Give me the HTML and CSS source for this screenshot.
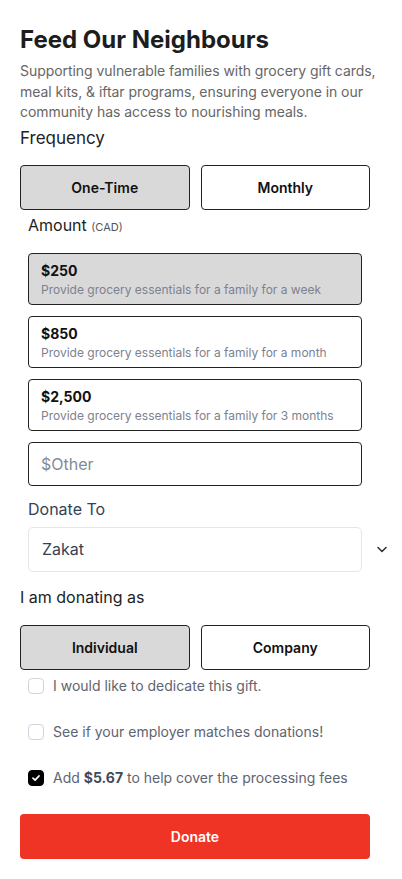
FILE: index.html
```html
<!DOCTYPE html>
<html lang="en">
<head>
    <meta charset="UTF-8">
    <meta name="viewport" content="width=device-width, initial-scale=1.0">
    <title>Feed Our Neighbours</title>
    <link rel="stylesheet" href="styles.css">
</head>
<body>
    <main class="donate-form">
        <h1 class="title">Feed Our Neighbours</h1>
        <p class="intro">Supporting vulnerable families with grocery gift cards, meal kits, &amp; iftar programs, ensuring everyone in our community has access to nourishing meals.</p>

        <div class="section-label">Frequency</div>
        <div class="toggle-group">
            <button class="toggle active">One-Time</button>
            <button class="toggle">Monthly</button>
        </div>

        <div class="inset">
            <div class="amount-label">Amount <span class="currency">(CAD)</span></div>
            <div class="amount-list">
                <button class="amount-card active">
                    <span class="amount-value">$250</span>
                    <span class="amount-desc">Provide grocery essentials for a family for a week</span>
                </button>
                <button class="amount-card">
                    <span class="amount-value">$850</span>
                    <span class="amount-desc">Provide grocery essentials for a family for a month</span>
                </button>
                <button class="amount-card">
                    <span class="amount-value">$2,500</span>
                    <span class="amount-desc">Provide grocery essentials for a family for 3 months</span>
                </button>
                <input class="amount-other" type="text" placeholder="$Other">
            </div>

            <div class="donate-to-label">Donate To</div>
            <div class="select-row">
                <div class="select-box">Zakat</div>
                <svg class="chevron" width="14" height="14" viewBox="0 0 14 14">
                    <path d="M3 5.5 L7 9.5 L11 5.5" fill="none" stroke="#333" stroke-width="1.6" stroke-linecap="round" stroke-linejoin="round"/>
                </svg>
            </div>
        </div>

        <div class="section-label donating-as">I am donating as</div>
        <div class="toggle-group">
            <button class="toggle active">Individual</button>
            <button class="toggle">Company</button>
        </div>

        <div class="checks">
            <label class="check-row">
                <span class="checkbox"></span>
                I would like to dedicate this gift.
            </label>
            <label class="check-row">
                <span class="checkbox"></span>
                See if your employer matches donations!
            </label>
            <label class="check-row">
                <span class="checkbox checked">
                    <svg width="10" height="10" viewBox="0 0 10 10">
                        <path d="M2 5.2 L4.1 7.2 L8 3" fill="none" stroke="#fff" stroke-width="1.8" stroke-linecap="round" stroke-linejoin="round"/>
                    </svg>
                </span>
                <span>Add <strong>$5.67</strong> to help cover the processing fees</span>
            </label>
        </div>

        <button class="donate-button">Donate</button>
    </main>
</body>
</html>
```

FILE: styles.css
```css
* {
    margin: 0;
    padding: 0;
    box-sizing: border-box;
}

body {
    font-family: Inter, 'Noto Sans', sans-serif;
    background: #ffffff;
    color: #1a1a1a;
}

.donate-form {
    width: 350px;
    margin-left: 20px;
    padding-top: 24px;
}

.title {
    font-size: 24px;
    font-weight: 700;
    line-height: 32px;
    color: #1d1d1d;
}

.intro {
    width: 372px;
    margin-top: 5px;
    font-size: 14px;
    line-height: 20.5px;
    letter-spacing: -0.05px;
    color: #666666;
}

.section-label {
    margin-top: 3px;
    font-size: 17px;
    line-height: 24px;
    color: #222222;
}

.toggle-group {
    display: grid;
    grid-template-columns: 1fr 1fr;
    gap: 11px;
    margin-top: 15px;
}

.toggle {
    height: 45px;
    background: #ffffff;
    border: 1px solid #222222;
    border-radius: 4px;
    font-family: inherit;
    font-size: 14px;
    font-weight: 600;
    color: #111111;
}

.toggle.active {
    background: #d9d9d9;
}

.inset {
    margin: 0 8px;
}

.amount-label {
    margin-top: 4px;
    font-size: 16px;
    line-height: 22px;
    color: #1d1d1d;
}

.currency {
    font-size: 11px;
    color: #555555;
}

.amount-list {
    display: flex;
    flex-direction: column;
    gap: 11px;
    margin-top: 15px;
}

.amount-card {
    display: flex;
    flex-direction: column;
    align-items: flex-start;
    height: 52px;
    padding: 8px 12px 0;
    background: #ffffff;
    border: 1px solid #222222;
    border-radius: 4px;
    font-family: inherit;
    text-align: left;
}

.amount-card.active {
    background: #d9d9d9;
}

.amount-value {
    font-size: 14px;
    font-weight: 700;
    line-height: 18px;
    color: #111111;
}

.amount-desc {
    margin-top: 2px;
    font-size: 12px;
    line-height: 16px;
    color: #7c8290;
}

.amount-other {
    height: 44px;
    padding: 0 12px;
    border: 1px solid #222222;
    border-radius: 4px;
    font-family: inherit;
    font-size: 16px;
    outline: none;
}

.amount-other::placeholder {
    color: #848a96;
}

.donate-to-label {
    margin-top: 12px;
    font-size: 16px;
    line-height: 22px;
    color: #344256;
}

.select-row {
    display: flex;
    align-items: center;
    margin-top: 7px;
}

.select-box {
    flex: 1;
    height: 45px;
    display: flex;
    align-items: center;
    padding: 0 13px;
    border: 1px solid #e3e6ea;
    border-radius: 5px;
    font-size: 16px;
    color: #344256;
}

.chevron {
    margin-left: 13px;
    margin-right: -27px;
}

.donating-as {
    margin-top: 13px;
    font-size: 16px;
}

.donating-as + .toggle-group {
    margin-top: 16px;
}

.checks {
    display: flex;
    flex-direction: column;
    gap: 26px;
    margin-top: 6px;
    padding-left: 8px;
}

.check-row {
    display: flex;
    align-items: center;
    gap: 9px;
    height: 20px;
    font-size: 14px;
    color: #5e6470;
}

.checkbox {
    width: 16px;
    height: 16px;
    flex-shrink: 0;
    display: flex;
    align-items: center;
    justify-content: center;
    border: 1px solid #d0d5dd;
    border-radius: 4px;
}

.checkbox.checked {
    background: #000000;
    border-color: #000000;
}

.check-row strong {
    color: #444a55;
}

.donate-button {
    display: block;
    width: 100%;
    height: 45px;
    margin-top: 26px;
    background: #ef3325;
    border: none;
    border-radius: 4px;
    font-family: inherit;
    font-size: 14px;
    font-weight: 600;
    color: #ffffff;
}
```
